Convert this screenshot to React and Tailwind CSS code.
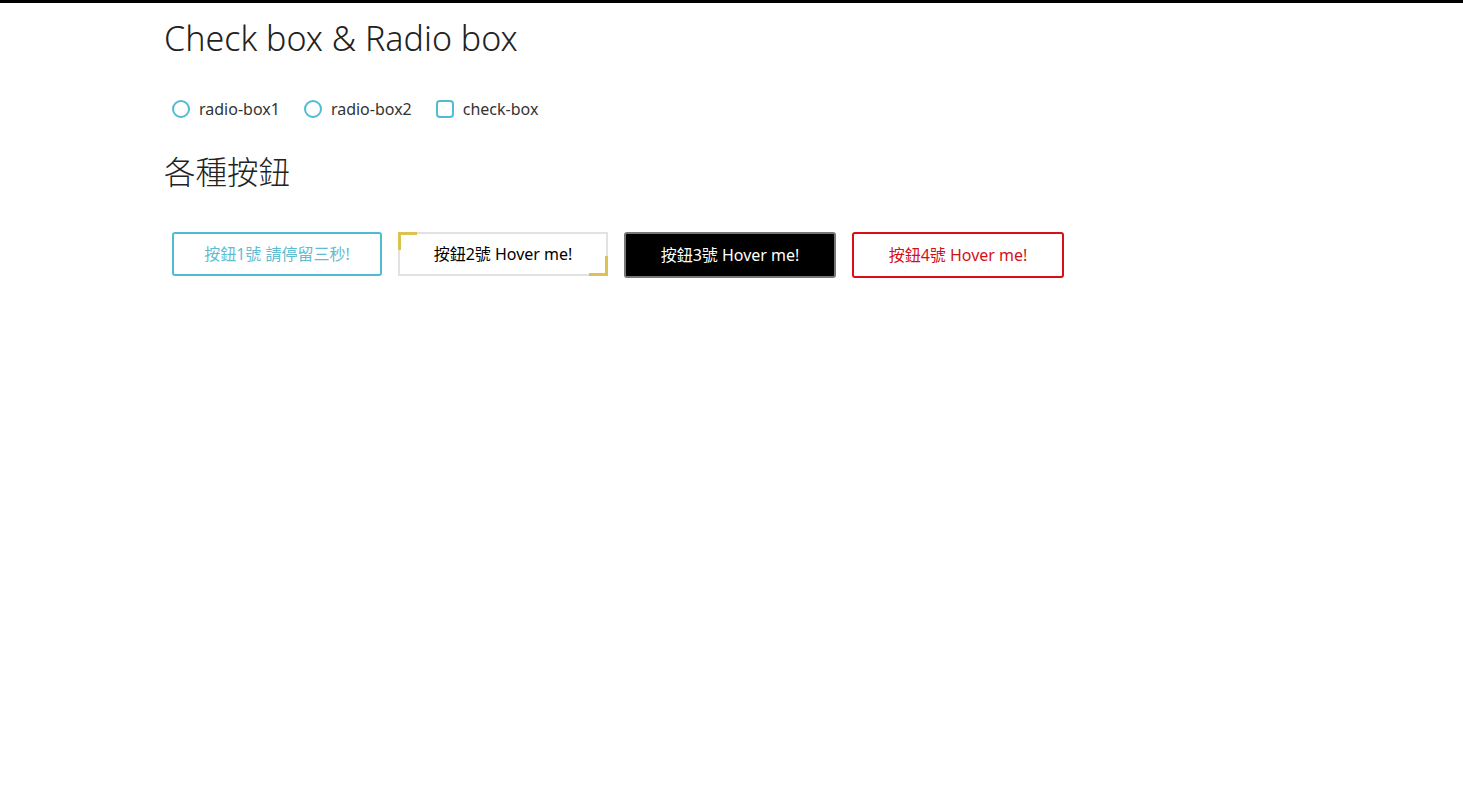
import { useState } from 'react'

const font = { fontFamily: '"Noto Sans", "Noto Sans CJK TC", sans-serif' }

function Choice({ type, label, name }) {
  const [on, setOn] = useState(false)
  return (
    <label className="flex items-center gap-[9px] cursor-pointer">
      <input
        type={type}
        name={name}
        checked={on}
        onChange={() => setOn(type === 'checkbox' ? !on : true)}
        className="sr-only"
      />
      <span
        className={`w-[18px] h-[18px] border-2 border-[#4fbcd4] ${
          type === 'radio' ? 'rounded-full' : 'rounded-[4px]'
        } flex items-center justify-center`}
      >
        {on && <span className="w-[8px] h-[8px] bg-[#4fbcd4] rounded-full" />}
      </span>
      <span className="text-[16px] text-[#333]">{label}</span>
    </label>
  )
}

export default function App() {
  return (
    <div className="min-h-screen bg-white" style={font}>
      <div className="h-[3px] bg-black" />
      <div className="pl-[164px]">
        {/* Check box & Radio box */}
        <h2 className="pt-[16px] text-[34px] leading-[38px] font-light text-[#222]">Check box &amp; Radio box</h2>
        <div className="mt-[40px] ml-[8px] flex items-center gap-[24px]">
          <Choice type="radio" name="r" label="radio-box1" />
          <Choice type="radio" name="r" label="radio-box2" />
          <Choice type="checkbox" label="check-box" />
        </div>

        {/* 各種按鈕 */}
        <h2 className="mt-[32px] text-[31.5px] leading-[38px] font-light text-[#222]">各種按鈕</h2>
        <div className="mt-[41px] ml-[8px] flex items-start gap-[16px] text-[16px]">
          <button className="w-[210px] h-[44px] border-2 border-[#4fbcd4] rounded-[3px] text-[#5fbdd3] bg-white">
            按鈕1號 請停留三秒!
          </button>
          <button className="relative w-[210px] h-[44px] border-2 border-[#e2e2e2] text-black bg-white">
            <span className="absolute -left-[2px] -top-[2px] w-[19px] h-[3px] bg-[#dcc24e]" />
            <span className="absolute -left-[2px] -top-[2px] w-[3px] h-[18px] bg-[#dcc24e]" />
            <span className="absolute -right-[2px] -bottom-[2px] w-[19px] h-[3px] bg-[#dcc24e]" />
            <span className="absolute -right-[2px] -bottom-[2px] w-[3px] h-[20px] bg-[#dcc24e]" />
            按鈕2號 Hover me!
          </button>
          <button className="w-[212px] h-[46px] border-2 border-[#777] rounded-[3px] bg-black text-white">
            按鈕3號 Hover me!
          </button>
          <button className="w-[212px] h-[46px] border-2 border-[#dc0d15] rounded-[3px] bg-white text-[#d3101a]">
            按鈕4號 Hover me!
          </button>
        </div>
      </div>
    </div>
  )
}
